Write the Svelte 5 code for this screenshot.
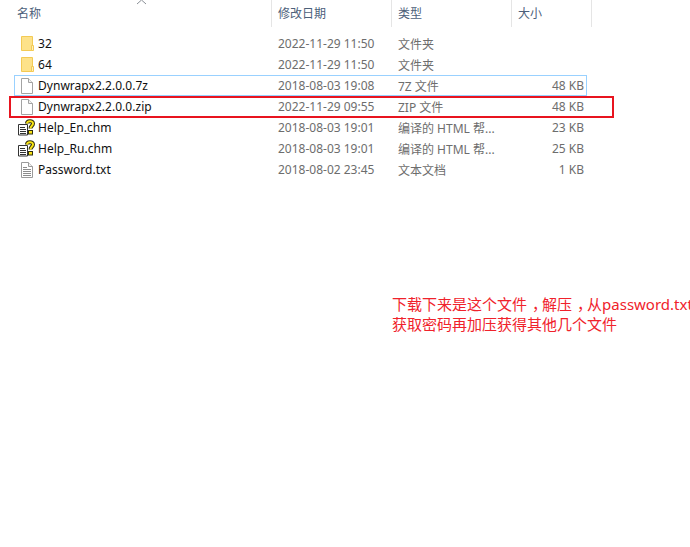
<script>
  const files = [
    { name: '32', date: '2022-11-29 11:50', type: '文件夹', size: '', icon: 'folder' },
    { name: '64', date: '2022-11-29 11:50', type: '文件夹', size: '', icon: 'folder' },
    { name: 'Dynwrapx2.2.0.0.7z', date: '2018-08-03 19:08', type: '7Z 文件', size: '48 KB', icon: 'file', selected: true },
    { name: 'Dynwrapx2.2.0.0.zip', date: '2022-11-29 09:55', type: 'ZIP 文件', size: '48 KB', icon: 'file', marked: true },
    { name: 'Help_En.chm', date: '2018-08-03 19:01', type: '编译的 HTML 帮...', size: '23 KB', icon: 'help' },
    { name: 'Help_Ru.chm', date: '2018-08-03 19:01', type: '编译的 HTML 帮...', size: '25 KB', icon: 'help' },
    { name: 'Password.txt', date: '2018-08-02 23:45', type: '文本文档', size: '1 KB', icon: 'text' }
  ];
</script>

<div class="page">
  <div class="head">
    <div class="hcell name">名称
      <svg class="sort" width="11" height="6" viewBox="0 0 11 6"><path d="M1 5 L5.5 1 L10 5" fill="none" stroke="#8a8f96" stroke-width="1"/></svg>
    </div>
    <div class="hcell">修改日期</div>
    <div class="hcell">类型</div>
    <div class="hcell">大小</div>
  </div>

  <div class="rows">
    {#each files as f}
      <div class="row" class:selected={f.selected}>
        <div class="namecell">
          <span class="icon">
            {#if f.icon === 'folder'}
              <svg width="16" height="16" viewBox="0 0 16 16">
                <path d="M2.500 .5h11v14h-11z" fill="#fde28a" stroke="#f3ca55"/>
                <path d="M12.500 9.500h2v5h-2z" fill="#fff0b8" stroke="#f3ca55"/>
              </svg>
            {:else if f.icon === 'file'}
              <svg width="16" height="16" viewBox="0 0 16 16">
                <path d="M2.500 .5h7l4 4v11h-11z" fill="#fff" stroke="#a3a3a3"/>
                <path d="M9.500 .5v4h4" fill="#f1f1f1" stroke="#a3a3a3"/>
              </svg>
            {:else if f.icon === 'text'}
              <svg width="16" height="16" viewBox="0 0 16 16">
                <path d="M2.500 .5h7l4 4v11h-11z" fill="#fff" stroke="#9a9a9a"/>
                <path d="M9.500 .5v4h4" fill="#f1f1f1" stroke="#9a9a9a"/>
                <path d="M4 5.500h4M4 7.500h8M4 9.500h8M4 11.500h8M4 13.500h8" stroke="#8c8c8c"/>
              </svg>
            {:else}
              <svg width="18" height="17" viewBox="0 0 18 17">
                <path d="M.5 5.500h9v10.500h-9z" fill="#fff" stroke="#333"/>
                <path d="M2 8.500h5M2 10.500h6M2 12.500h6M2 14.500h6" stroke="#333"/>
                <path d="M9 4.500C9 1.800 15 1.200 15 4.500C15 6.800 12.500 6.800 12.500 9.500" fill="none" stroke="#2f2f10" stroke-width="4"/>
                <path d="M9 4.500C9 1.800 15 1.200 15 4.500C15 6.800 12.500 6.800 12.500 9.500" fill="none" stroke="#f9e316" stroke-width="2"/>
                <rect x="10.500" y="11.500" width="4" height="3.500" fill="#f9e316" stroke="#2f2f10"/>
              </svg>
            {/if}
          </span>
          <span class="filename">{f.name}</span>
        </div>
        <div class="meta">{f.date}</div>
        <div class="meta">{f.type}</div>
        <div class="meta size">{f.size}</div>
        {#if f.marked}<div class="redbox"></div>{/if}
      </div>
    {/each}
  </div>

  <div class="note">
    <div>下载下来是这个文件<span class="comma">，</span>解压<span class="comma">，</span>从password.txt</div>
    <div>获取密码再加压获得其他几个文件</div>
  </div>
</div>

<style>
  :global(body) {
    margin: 0;
    background: #fff;
    overflow: hidden;
  }

  .page {
    width: 690px;
    height: 547px;
    overflow: hidden;
    font-family: "Noto Sans", "Noto Sans CJK SC", sans-serif;
    font-size: 12px;
  }

  .head {
    display: grid;
    grid-template-columns: 272px 120px 120px 80px;
    height: 27px;
  }

  .hcell {
    position: relative;
    padding: 5px 0 0 6px;
    color: #4c607a;
    line-height: 18px;
    border-right: 1px solid #e5e5e5;
    box-sizing: border-box;
  }

  .hcell.name {
    padding-left: 17px;
  }

  .sort {
    position: absolute;
    left: 136px;
    top: -1px;
  }

  .rows {
    padding: 6px 0 0 14px;
  }

  .row {
    position: relative;
    display: grid;
    grid-template-columns: 258px 120px 120px 74px;
    width: 573px;
    height: 21px;
    align-items: center;
    box-sizing: border-box;
    border: 1px solid transparent;
  }

  .row.selected {
    border-color: #99d1ff;
  }

  .namecell {
    display: flex;
    align-items: center;
    gap: 2px;
    padding-left: 3px;
    color: #111;
    letter-spacing: 0.03px;
  }

  .icon {
    display: flex;
    width: 18px;
    flex: none;
    justify-content: center;
  }

  .meta {
    color: #6d6d6d;
    padding-left: 5px;
    white-space: nowrap;
  }

  .size {
    text-align: right;
    padding: 0 3px 0 0;
  }

  .redbox {
    position: absolute;
    left: -6px;
    top: -1px;
    width: 605px;
    height: 22px;
    box-sizing: border-box;
    border: 2px solid #e8141f;
  }

  .note {
    margin: 114px 0 0 392px;
    color: #f0222b;
    font-size: 15px;
    line-height: 20px;
    white-space: nowrap;
  }

  .comma {
    padding-left: 5px;
    letter-spacing: -5px;
  }
</style>
